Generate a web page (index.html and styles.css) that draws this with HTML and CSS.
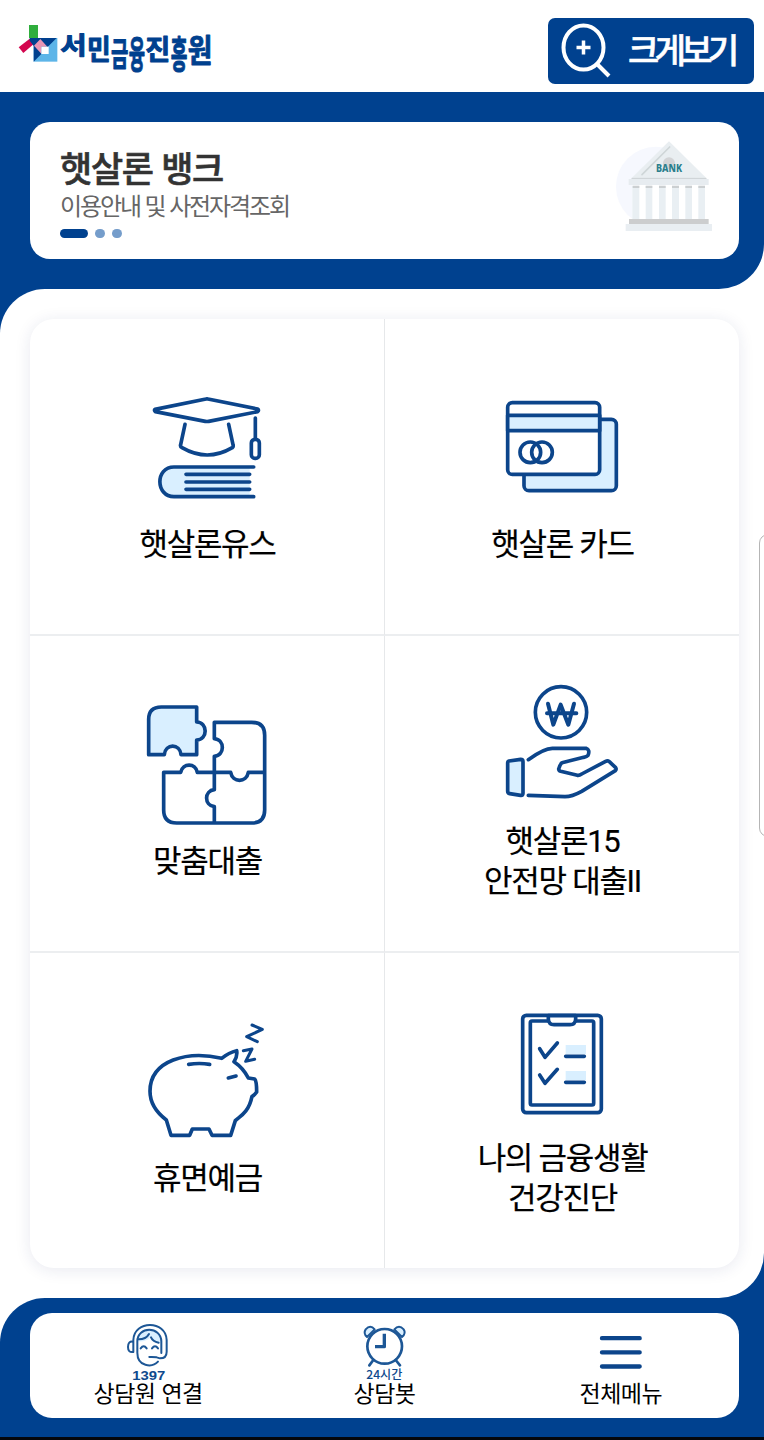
FILE: index.html
```html
<!DOCTYPE html>
<html lang="ko">
<head>
  <meta charset="UTF-8" />
  <meta name="viewport" content="width=device-width, initial-scale=1.0"/>
  <title>서민금융진흥원</title>
  <link rel="stylesheet" href="styles.css">
</head>
<body>
  <header class="header">
    <svg class="logo" viewBox="45 60 600 170">
      <path fill="#2fae3d" d="M87 75h27v39H87z"/>
      <path fill="#d3064f" d="M56 142L89 116L102 131L70 159z"/>
      <path fill="#5db5e8" d="M101 114h71v71h-71z"/>
      <path fill="#00408e" d="M89 114H170L142 142H124V162L101 185V138L89 122z"/>
      <path fill="#e895b4" d="M121 117L142 140H124V161L102 137z"/>
      <path fill="#fff" d="M124 140h22v22h-22z"/>
      <g class="logo-text">
        <text x="181" y="162" font-size="70" textLength="79" lengthAdjust="spacingAndGlyphs">서</text>
        <text x="261" y="180" font-size="86" textLength="71" lengthAdjust="spacingAndGlyphs">민</text>
        <text x="333" y="199" font-size="100" textLength="52" lengthAdjust="spacingAndGlyphs">금</text>
        <text x="386" y="205" font-size="114" textLength="49" lengthAdjust="spacingAndGlyphs">융</text>
        <text x="436" y="180" font-size="86" textLength="75" lengthAdjust="spacingAndGlyphs">진</text>
        <text x="512" y="205" font-size="114" textLength="50" lengthAdjust="spacingAndGlyphs">흥</text>
        <text x="563" y="187" font-size="94" textLength="74" lengthAdjust="spacingAndGlyphs">원</text>
      </g>
    </svg>
    <a class="zoom-btn" href="#">
      <svg class="zoom-icon" viewBox="0 0 50 54">
        <ellipse cx="22.500" cy="23.500" rx="20" ry="22"/>
        <path d="M36 40l12 12"/>
        <path class="plus" d="M15.500 23.500h14M22.500 16.500v14"/>
      </svg>
      <span>크게보기</span>
    </a>
  </header>

  <section class="hero">
    <a class="banner" href="#">
      <div class="banner-text">
        <h1>햇살론 뱅크</h1>
        <p>이용안내 및 사전자격조회</p>
        <div class="dots"><i class="on"></i><i></i><i></i></div>
      </div>
      <svg class="bank" viewBox="78 84 315 291">
        <circle cx="216" cy="230" r="120" fill="#f6f8fe"/>
        <path fill="#e9eef1" d="M255 94L366 203H144z"/>
        <circle cx="255" cy="160" r="18" fill="#d3d4d6"/>
        <path stroke="#cfd6d8" stroke-width="5" d="M257 111L174 194"/>
        <path stroke="#d0d5d8" stroke-width="4" d="M144 205H366"/>
        <path fill="#e7ecf0" d="M134 207h240v18H134z"/>
        <path fill="#fff" d="M145 225h219v102H145z"/>
        <path fill="#e9eff3" d="M145 227h21v100h-21zM185 227h20v100h-20zM225 227h20v100h-20zM264 227h21v100h-21zM304 227h20v100h-20zM343 227h20v100h-20z"/>
        <path fill="#cbcfd1" d="M146 227h20v7h-20zM185 227h20v7h-20zM225 227h20v7h-20zM264 227h21v7h-21zM304 227h20v7h-20zM343 227h20v7h-20z"/>
        <path fill="#cccdce" d="M135 327h239v15H135z"/>
        <path fill="#e9eef2" d="M125 342h259v21H125z"/>
        <text class="bank-text" x="216" y="186" textLength="78" lengthAdjust="spacingAndGlyphs">BANK</text>
      </svg>
    </a>
  </section>

  <div class="main-wrap">
    <main>
      <nav class="menu">
        <a href="#">
          <svg class="icon" viewBox="51 30 360 360">
            <path d="M75 91L228 60Q231 59 234 60L383 90Q388 94 383 98L236 127Q231 128 226 127L76 98Q72 94 75 91z"/>
            <path d="M165 136L152 197Q150 203 156 206Q232 250 307 206Q311 203 309 197L296 136M376 117V180"/>
            <rect x="364" y="181" width="24" height="57" rx="11"/>
            <path class="tint-only" d="M359 264H132C75 264 76 353 132 353H359z"/>
            <path d="M371 264H132C75 264 76 353 132 353H371"/>
            <path d="M168 286H359M168 309H359M168 331H359"/>
          </svg>
          <span>햇살론유스</span>
        </a>
        <a href="#">
          <svg class="icon" viewBox="66 30 360 360">
            <rect class="tint" x="132" y="121" width="277" height="214" rx="15"/>
            <rect class="paper" x="83" y="71" width="276" height="215" rx="14"/>
            <path class="tint" d="M83 109H359V155H83z"/>
            <circle cx="151" cy="220" r="31"/>
            <circle cx="186" cy="220" r="31"/>
          </svg>
          <span>햇살론 카드</span>
        </a>
        <a href="#">
          <svg class="icon" viewBox="51 48 360 360">
            <path class="tint" d="M56 194V88Q56 51 94 51H200V96C234 97 234 149 200 150V194H153C150 160 106 160 103 194z"/>
            <path d="M253 246V199C285 196 285 149 253 146V97H365Q404 97 404 136V360Q404 399 365 399H140Q101 399 101 360V247H152C158 218 197 218 202 247H302C308 279 349 279 355 247H404M253 246V299C222 302 222 346 253 350V399"/>
          </svg>
          <span>맞춤대출</span>
        </a>
        <a href="#">
          <svg class="icon" viewBox="96 48 360 360">
            <circle cx="273" cy="127" r="77"/>
            <path class="won" d="M234 101L250 164L272 104L295 164L312 101M231 130H319"/>
            <path class="tint" d="M117 273L152 268Q159 268 159 275V370Q159 377 152 376L119 371Q113 370 113 364V279Q113 274 117 273z"/>
            <path d="M175 269Q222 235 247 235H348Q361 239 354 256Q351 260 341 262L276 278Q271 282 266 297Q266 302 272 304L322 316Q328 317 335 312L407 274Q413 271 418 275L437 293Q440 298 436 302L335 364Q306 380 285 380L175 376"/>
          </svg>
          <span>햇살론15<br>안전망 대출II</span>
        </a>
        <a href="#">
          <svg class="icon" viewBox="51 39 360 360">
            <path d="M60 244C60 150 174 121 275 145Q297 127 320 122Q323 139 312 155Q340 174 355 204L374 207Q380 213 380 246Q373 256 366 259C356 309 328 320 316 332L302 376H246L237 357H187L179 376H123L109 330Q60 293 60 244z"/>
            <path d="M176 163Q208 158 239 163M295 204L318 198"/>
            <path class="zzz" d="M366 45L397 58L350 80L382 95M340 122L366 117L347 154L374 148"/>
          </svg>
          <span>휴면예금</span>
        </a>
        <a href="#">
          <svg class="icon" viewBox="126 9 360 360">
            <rect x="188" y="46" width="236" height="292" rx="11"/>
            <rect x="211" y="63" width="190" height="252" rx="5"/>
            <path class="paper" d="M265 47V57Q266 74 282 74H330Q346 74 347 57V47z"/>
            <path class="tint-only" d="M317 135h61v28h-61zM317 213h61v28h-61z"/>
            <path d="M239 146L255 172L292 129M239 225L255 250L292 208M317 169H373M317 247H373"/>
          </svg>
          <span>나의 금융생활<br>건강진단</span>
        </a>
      </nav>
    </main>
  </div>

  <footer class="footer">
    <nav class="tabs">
      <a href="#">
        <svg class="tab-icon" viewBox="354 204 180 186">
          <path class="tint-only" d="M412 274Q413 238 447 238Q483 238 483 278Q460 276 453 260Q438 277 412 274z"/>
          <path d="M400 306V270C402 210 498 210 500 270V305Q500 325 480 325L470 322Q458 320 448 321"/>
          <path d="M412 310V274C412 228 483 228 484 274V309M412 308C412 350 456 354 474 335"/>
          <path d="M399 275Q384 273 384 291Q384 308 399 306M422 295Q431 283 440 295M456 295Q465 283 474 295M416 268Q438 268 447 252M453 262Q458 274 476 278"/>
          <text class="num" x="397" y="390" textLength="99" lengthAdjust="spacingAndGlyphs">1397</text>
        </svg>
        <span>상담원 연결</span>
      </a>
      <a href="#">
        <svg class="tab-icon" viewBox="1062 204 180 186">
          <path class="tint" d="M1101 261Q1089 250 1097 238Q1111 222 1124 238zM1206 261Q1219 250 1211 238Q1197 222 1183 238z"/>
          <circle class="paper clock" cx="1154" cy="289" r="52"/>
          <path class="clock" d="M1120 330L1108 346M1187 330L1200 346"/>
          <path class="hands" d="M1153 251V290H1125"/>
          <text class="hours" x="1099" y="388" textLength="108" lengthAdjust="spacingAndGlyphs">24시간</text>
        </svg>
        <span>상담봇</span>
      </a>
      <a href="#">
        <svg class="tab-icon" viewBox="153 204 180 186">
          <path class="bars" d="M186 264.500H299M186 307H299M186 349.500H299"/>
        </svg>
        <span>전체메뉴</span>
      </a>
    </nav>
  </footer>

  <div class="edge-handle"></div>
</body>
</html>
```
FILE: styles.css
```css
* { box-sizing: border-box; }

body {
  margin: 0;
  width: 764px;
  height: 1440px;
  overflow: hidden;
  position: relative;
  background: #fff;
  color: #000;
  font-family: "Noto Sans CJK KR", sans-serif;
}

a { color: inherit; text-decoration: none; }

svg {
  display: block;
  overflow: visible;
  fill: none;
  stroke-linecap: round;
  stroke-linejoin: round;
}

/* header */
.header {
  height: 92px;
  padding: 18px 10px 8px 15px;
  display: flex;
  justify-content: space-between;
  align-items: flex-start;
}

.logo {
  width: 200px;
  height: 56.67px;
  margin-top: 2px;
}

.logo-text {
  fill: #00408e;
  stroke: #00408e;
  stroke-width: 3;
  font-weight: 700;
}

.zoom-btn {
  width: 206px;
  height: 66px;
  padding: 0 0 0 13px;
  display: flex;
  align-items: center;
  border-radius: 7px;
  background: #00418f;
  color: #fff;
  font-size: 34px;
  font-weight: 500;
  letter-spacing: -4.6px;
  line-height: 60px;
  -webkit-text-stroke: 0.5px #fff;
}

.zoom-btn span { margin-top: -4px; }

.zoom-icon {
  width: 50px;
  height: 54px;
  margin-right: 17px;
  stroke: #fff;
  stroke-width: 4;
  stroke-linecap: butt;
}

.plus { stroke-width: 3.5; }

/* banner */
.hero {
  height: 197px;
  padding: 30px 25px 30px 30px;
  background: #00418f;
  border-bottom-right-radius: 45px;
}

.banner {
  height: 137px;
  padding: 0 24px 0 30px;
  display: flex;
  justify-content: space-between;
  align-items: flex-start;
  background: #fff;
  border-radius: 20px;
}

.banner h1 {
  margin: 25px 0 0;
  font-size: 35px;
  font-weight: 500;
  line-height: 40px;
  letter-spacing: -1.3px;
  color: #333;
  -webkit-text-stroke: 0.6px #333;
}

.banner p {
  margin: 2px 0 0;
  font-size: 24px;
  font-weight: 400;
  line-height: 32px;
  letter-spacing: -2.1px;
  color: #666;
}

.dots {
  display: flex;
  gap: 7px;
  margin-top: 8px;
}

.dots i {
  width: 10px;
  height: 9px;
  border-radius: 5px;
  background: #759dcb;
}

.dots .on {
  width: 28px;
  background: #00418f;
}

.bank {
  width: 105px;
  height: 97px;
  margin-top: 16px;
}

.bank-text {
  fill: #2b7e8c;
  font-family: "Noto Sans", sans-serif;
  font-size: 34px;
  font-weight: 800;
}

/* menu: blue shows behind the two rounded corners */
.main-wrap {
  background:
    linear-gradient(#00418f, #00418f) 0 0 / 50px 50px no-repeat,
    linear-gradient(#00418f, #00418f) 100% 100% / 50px 50px no-repeat;
}

main {
  height: 1009px;
  padding: 30px 25px 30px 30px;
  background: #fff;
  border-radius: 45px 0 45px 0;
}

.menu {
  height: 949px;
  display: grid;
  grid-template-columns: 355px 354px;
  grid-template-rows: 317px 317px 315px;
  background: #fff;
  border-radius: 24px;
  box-shadow: 0 2px 16px rgba(30, 40, 110, 0.1);
}

.menu a {
  display: flex;
  flex-direction: column;
  align-items: center;
  justify-content: center;
  gap: 16px;
  border-bottom: 2px solid #eceef0;
}

.menu a:nth-child(odd) { border-right: 1px solid #e6e8ea; }
.menu a:nth-last-child(-n+2) { border-bottom: 0; }

.menu span {
  padding-left: 1px;
  font-family: Roboto, "Noto Sans CJK KR", sans-serif;
  font-size: 31px;
  line-height: 40px;
  letter-spacing: -1.3px;
  text-align: center;
  -webkit-text-stroke: 0.2px #000;
}

.icon {
  width: 120px;
  height: 120px;
  stroke: #0c458b;
  stroke-width: 11;
}

.tint { fill: #d9efff; }
.tint-only { fill: #d9efff; stroke: none; }
.paper { fill: #fff; }
.won { stroke-width: 12; }
.zzz { stroke-width: 9; }

/* bottom bar */
.footer {
  height: 142px;
  padding: 15px 25px 0 30px;
  background: #00418f;
  border-top-left-radius: 45px;
  border-bottom: 3px solid #05070c;
}

.tabs {
  height: 105px;
  padding-top: 5px;
  display: flex;
  background: #fff;
  border-radius: 22px;
}

.tabs a {
  flex: 1;
  display: flex;
  flex-direction: column;
  align-items: center;
}

.tabs span {
  margin-top: -1px;
  font-size: 23px;
  line-height: 26px;
  letter-spacing: -0.5px;
}

.tab-icon {
  width: 60px;
  height: 62px;
  stroke: #1d5796;
  stroke-width: 6;
}

.tab-icon text { fill: #0f4a8d; stroke: none; }
.num { font-family: "Liberation Sans", sans-serif; font-size: 39px; font-weight: bold; }
.hours { font-size: 37px; font-weight: 500; }
.clock { stroke-width: 8; }
.hands { stroke-width: 10; stroke-linecap: butt; }
.tab-icon .bars { stroke: #0c458b; stroke-width: 13; }

/* side panel handle peeking in from the screen edge */
.edge-handle {
  position: absolute;
  top: 534px;
  left: 759px;
  width: 20px;
  height: 303px;
  border: 1px solid #b5b5b5;
  border-radius: 9px;
  background: #fff;
}
```
